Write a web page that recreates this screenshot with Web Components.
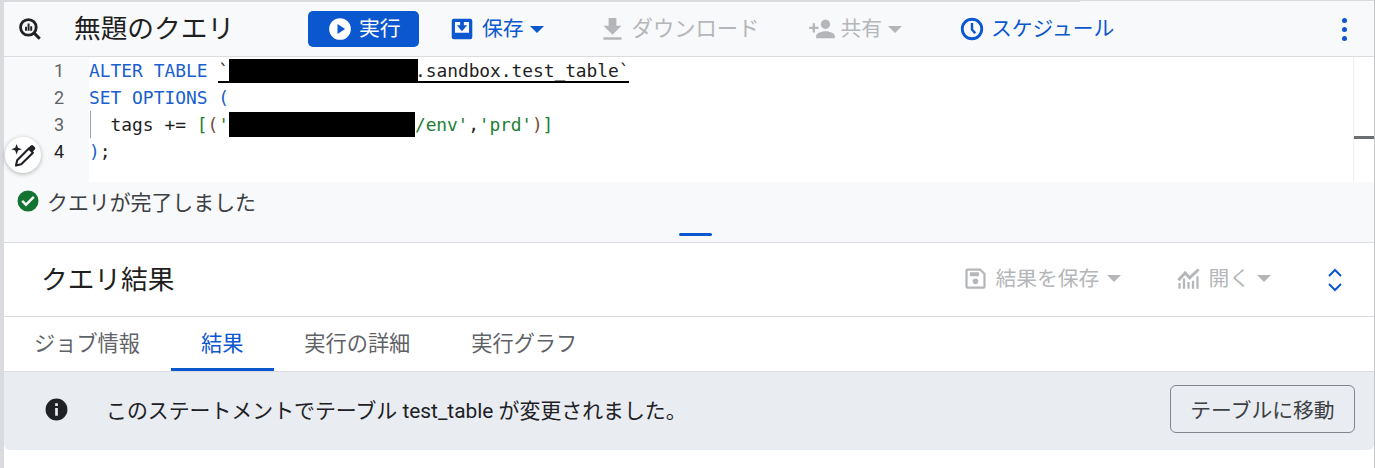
<!DOCTYPE html>
<html lang="ja">
<head>
<meta charset="utf-8">
<style>
  html, body { margin: 0; padding: 0; background: #fff; }
  body { width: 1375px; height: 468px; overflow: hidden; font-family: Roboto, "Noto Sans CJK JP", sans-serif; }
</style>
</head>
<body>
<bq-app></bq-app>
<script>
(() => {
  const UI_FONT = `Roboto, "Noto Sans CJK JP", sans-serif`;

  const ICONS = {
    query: '<circle cx="10.5" cy="10.5" r="7.2" fill="none" stroke="currentColor" stroke-width="2.6"/><path d="M15.8 15.8 21 21" stroke="currentColor" stroke-width="2.8" fill="none"/><path d="M7.4 10h1.8v3.5H7.4zM9.8 7h1.8v6.500H9.800zM12.200 9.500H14v4h-1.800z" fill="currentColor"/>',
    play: '<path fill-rule="evenodd" d="M12 2a10 10 0 1 0 0 20 10 10 0 0 0 0-20zM9.700 16.700V7.300l7 4.700z" fill="currentColor"/>',
    save: '<path fill-rule="evenodd" d="M4.500 2.500h15a2 2 0 0 1 2 2v15a2 2 0 0 1-2 2h-15a2 2 0 0 1-2-2v-15a2 2 0 0 1 2-2zM5.500 5.500v10h13v-10z" fill="currentColor"/><path d="M10.300 3h3.400v5.500h3L12 14 7.300 8.500h3z" fill="currentColor"/>',
    download: '<path d="M19 9h-4V3H9v6H5l7 7 7-7zM5 18v2h14v-2H5z" fill="currentColor"/>',
    share: '<path d="M15 12c2.210 0 4-1.790 4-4s-1.790-4-4-4-4 1.790-4 4 1.790 4 4 4zM6 10V7H4v3H1v2h3v3h2v-3h3v-2H6zm9 4c-2.670 0-8 1.340-8 4v2h16v-2c0-2.660-5.330-4-8-4z" fill="currentColor"/>',
    clock: '<circle cx="12" cy="12" r="9" fill="none" stroke="currentColor" stroke-width="2.600"/><path d="M12 6.500V12.500l3 3.500" fill="none" stroke="currentColor" stroke-width="2.200"/>',
    floppy: '<path fill-rule="evenodd" d="M5 3h11.500L21 7.500V19a2 2 0 0 1-2 2H5a2 2 0 0 1-2-2V5a2 2 0 0 1 2-2zm0 2v14h14V8.300L15.700 5zm2 1.500h8v3.500H7zM12 12a2.500 2.500 0 1 1 0 5 2.500 2.500 0 0 1 0-5z" fill="currentColor"/>',
    chart: '<path d="M3 21v-5h2v5zm4 0v-9h2v9zm4 0v-6h2v6zm4 0v-7h2v7zm4 0V10h2v11z" fill="currentColor"/><path d="M3 13.500 9 7l4 4.500L21 4" fill="none" stroke="currentColor" stroke-width="2.600"/>'
  };

  const svg = (name, size) => `<svg width="${size}" height="${size}" viewBox="0 0 24 24" aria-hidden="true">${ICONS[name]}</svg>`;

  class BqAction extends HTMLElement {
    constructor() {
      super();
      const icon = this.getAttribute('icon');
      const size = this.getAttribute('size') || 24;
      const caret = this.hasAttribute('caret') ? '<span class="caret"></span>' : '';
      this.attachShadow({ mode: 'open' }).innerHTML = `
        <style>
          :host { display: inline-flex; align-items: center; gap: var(--icon-gap, 8px); color: var(--c, #0b57d0); font-size: var(--fs, 20.800px); line-height: 28px; white-space: nowrap; }
          svg { display: block; flex: none; }
          .caret { width: 0; height: 0; border: 7px solid transparent; border-top: 7px solid currentColor; border-bottom: 0; margin-left: var(--caret-gap, -1px); }
        </style>
        ${svg(icon, size)}<slot></slot>${caret}`;
    }
  }
  customElements.define('bq-action', BqAction);

  class BqToolbar extends HTMLElement {
    constructor() {
      super();
      this.attachShadow({ mode: 'open' }).innerHTML = `
        <style>
          :host { display: flex; align-items: center; height: 54px; background: #f8f9fa; border-bottom: 1px solid #dadce0; color: #1f1f1f; position: relative; }
          .logo { margin-left: 13px; width: 26px; height: 26px; color: #202124; }
          .logo svg { display: block; }
          h1 { margin: 0 0 0 31px; width: 234px; font-size: 26.700px; font-weight: 400; line-height: 34px; white-space: nowrap; }
          .run { box-sizing: border-box; width: 111px; height: 36px; border-radius: 5px; background: #0b57d0; --c: #fff; --icon-gap: 6px; padding-left: 19px; }
          .save { margin-left: 30px; --icon-gap: 7px; }
          .dl { margin-left: 53px; --c: #b4b6b9; --icon-gap: 4px; --fs: 21.300px; }
          .share { margin-left: 49px; --c: #b4b6b9; --icon-gap: 4px; --caret-gap: 2px; }
          .sched { margin-left: 57px; --icon-gap: 6px; }
          .kebab { margin-left: auto; margin-right: 27px; display: flex; flex-direction: column; gap: 4px; }
          .kebab i { width: 5px; height: 5px; border-radius: 50%; background: #0b57d0; }
        </style>
        <span class="logo">${svg('query', 26)}</span>
        <h1>無題のクエリ</h1>
        <bq-action class="run" icon="play" size="26">実行</bq-action>
        <bq-action class="save" icon="save" size="26" caret>保存</bq-action>
        <bq-action class="dl" icon="download" size="31">ダウンロード</bq-action>
        <bq-action class="share" icon="share" size="28" caret>共有</bq-action>
        <bq-action class="sched" icon="clock" size="26">スケジュール</bq-action>
        <span class="kebab"><i></i><i></i><i></i></span>`;
    }
  }
  customElements.define('bq-toolbar', BqToolbar);

  class BqEditor extends HTMLElement {
    constructor() {
      super();
      this.attachShadow({ mode: 'open' }).innerHTML = `
        <style>
          :host { display: grid; grid-template-columns: 85px 1fr 21px; height: 125px; background: #fff; position: relative; font: 17.900px/27px "DejaVu Sans Mono", monospace; color: #1f1f1f; }
          .nums { background: #f8f9fa; color: #5f6368; text-align: right; padding-right: 25px; font-family: ${UI_FONT}; font-size: 18px; box-sizing: border-box; }
          .nums div:last-child { color: #1f1f1f; }
          .code { position: relative; }
          .line { height: 27px; white-space: pre; }
          .kw { color: #1a5fd0; }
          .br { color: #1a5fd0; }
          .grn { color: #1e7e34; }
          .brn { color: #7b4a36; }
          .tight { letter-spacing: -0.150px; }
          .tick { border-bottom: 2px solid #000; display: inline-block; height: 24px; line-height: 27px; }
          .tick .tight { letter-spacing: -0.050px; }
          .x { display: inline-block; background: #000; height: 23px; vertical-align: top; margin-top: 2px; }
          .x.low { height: 25px; margin-top: 1px; }
          .indent { position: absolute; left: 1px; top: 54px; width: 1px; height: 27px; background: #9aa0a6; }
          .ruler { border-left: 1px solid #eceef0; position: relative; }
          .ruler::after { content: ""; position: absolute; left: 0; right: 0; top: 79px; height: 3px; background: #6b6e72; }
          .wand { position: absolute; left: 1px; top: 80px; width: 36px; height: 36px; border-radius: 50%; background: #fff; box-shadow: 0 1px 4px rgba(60,64,67,.4); display: flex; align-items: center; justify-content: center; color: #202124; }
          .wand svg { display: block; }
        </style>
        <div class="nums"><div>1</div><div>2</div><div>3</div><div>4</div></div>
        <div class="code">
          <span class="indent"></span>
          <div class="line"><span class="kw">ALTER TABLE</span> <span class="tick">\`<span class="x" style="width:189px;margin-right:-3px"></span><span class="tight">.sandbox.test_table\`</span></span></div>
          <div class="line"><span class="kw">SET OPTIONS</span> <span class="br">(</span></div>
          <div class="line">  tags += <span class="grn">[</span><span class="brn">(</span><span class="grn">'</span><span class="x low" style="width:186px"></span><span class="tight"><span class="grn">/env'</span>,<span class="grn">'prd'</span><span class="brn">)</span><span class="grn">]</span></span></div>
          <div class="line"><span class="br">)</span>;</div>
        </div>
        <div class="ruler"></div>
        <div class="wand"><svg width="28" height="28" viewBox="0 0 24 24" aria-hidden="true"><path d="M6 21l1-4.500L17 6.500 20.500 10 10.500 20z" fill="none" stroke="currentColor" stroke-width="1.800" stroke-linejoin="round"/><path d="M16.500 6l2-2a1.700 1.700 0 0 1 2.400 0l1.100 1.100a1.700 1.700 0 0 1 0 2.400l-2 2z" fill="currentColor"/><path d="M6.500 2.500l1.200 3.300 3.300 1.200-3.300 1.200-1.200 3.300-1.200-3.300L2 7l3.300-1.200z" fill="currentColor"/></svg></div>`;
    }
  }
  customElements.define('bq-editor', BqEditor);

  class BqStatus extends HTMLElement {
    constructor() {
      super();
      this.attachShadow({ mode: 'open' }).innerHTML = `
        <style>
          :host { display: block; height: 61px; box-sizing: border-box; background: #f8f9fa; border-bottom: 1px solid #dadce0; position: relative; color: #3c4043; font-size: 20.900px; }
          .row { display: flex; align-items: center; gap: 7px; height: 38px; padding-left: 12px; }
          svg { display: block; }
          .handle { position: absolute; left: 675px; bottom: 6px; width: 33px; height: 3px; border-radius: 2px; background: #0b57d0; }
        </style>
        <div class="row"><svg width="24" height="24" viewBox="0 0 24 24" aria-hidden="true"><path fill-rule="evenodd" d="M12 1.500a10.500 10.500 0 1 0 0 21 10.500 10.500 0 0 0 0-21zM10 17.400l-4.700-4.700 1.800-1.700 2.900 2.900 6.900-6.900 1.800 1.700z" fill="#137333"/></svg><slot></slot></div>
        <span class="handle"></span>`;
    }
  }
  customElements.define('bq-status', BqStatus);

  class BqResultsHeader extends HTMLElement {
    constructor() {
      super();
      this.attachShadow({ mode: 'open' }).innerHTML = `
        <style>
          :host { display: flex; align-items: center; height: 73px; border-bottom: 1px solid #dadce0; color: #1f1f1f; --c: #b4b6b9; }
          h2 { margin: 0 0 5px 37px; font-size: 26.700px; font-weight: 400; white-space: nowrap; flex: 1; }
          bq-action { --caret-gap: 2px; --icon-gap: 6px; margin-bottom: 2px; }
          .open { margin-left: 54px; --icon-gap: 6px; --caret-gap: 1px; }
          .fold { margin: 0 31px 0 56px; color: #0b57d0; display: block; }
        </style>
        <h2><slot></slot></h2>
        <bq-action icon="floppy" size="27" caret>結果を保存</bq-action>
        <bq-action class="open" icon="chart" size="27" caret>開く</bq-action>
        <svg class="fold" width="16" height="24" viewBox="0 0 16 24" aria-hidden="true"><path d="M2 8l6-6 6 6M2 16l6 6 6-6" fill="none" stroke="currentColor" stroke-width="2"/></svg>`;
    }
  }
  customElements.define('bq-results-header', BqResultsHeader);

  class BqTabs extends HTMLElement {
    constructor() {
      super();
      this.attachShadow({ mode: 'open' }).innerHTML = `
        <style>
          :host { display: flex; height: 54px; border-bottom: 1px solid #dadce0; font-size: 21.200px; color: #5f6368; }
          span { display: flex; align-items: center; padding: 0 31px 2px 30px; height: 54px; box-sizing: border-box; white-space: nowrap; border-bottom: 3px solid transparent; }
          span:first-child { padding-left: 33px; padding-right: 26px; }
          .on { color: #0b57d0; border-bottom-color: #0b57d0; }
        </style>
        <span>ジョブ情報</span><span class="on">結果</span><span>実行の詳細</span><span>実行グラフ</span>`;
    }
  }
  customElements.define('bq-tabs', BqTabs);

  class BqNotice extends HTMLElement {
    constructor() {
      super();
      this.attachShadow({ mode: 'open' }).innerHTML = `
        <style>
          :host { display: flex; align-items: center; height: 78px; box-sizing: border-box; background: #e9ecf1; border-radius: 0 0 6px 6px; color: #202124; font-size: 20.900px; padding: 0 19px 4px 40px; }
          svg { display: block; flex: none; }
          p { margin: 0 0 0 37px; flex: 1; white-space: nowrap; }
          button { font: inherit; font-size: 20.800px; color: #3c4043; background: transparent; border: 1px solid #80868b; border-radius: 6px; height: 48px; width: 185px; padding: 0; }
        </style>
        <svg width="25" height="25" viewBox="0 0 24 24" aria-hidden="true"><path fill-rule="evenodd" d="M12 1.500a10.500 10.500 0 1 0 0 21 10.500 10.500 0 0 0 0-21zM10.700 6h2.600v2.600h-2.600zm0 4.500h2.600V18h-2.600z" fill="#202124"/></svg>
        <p><slot></slot></p>
        <button>テーブルに移動</button>`;
    }
  }
  customElements.define('bq-notice', BqNotice);

  class BqApp extends HTMLElement {
    constructor() {
      super();
      this.attachShadow({ mode: 'open' }).innerHTML = `
        <style>
          :host { display: block; box-sizing: border-box; width: 1375px; height: 468px; padding-top: 2px; border-left: 4px solid #d9dbde; border-right: 1px solid #c4c6c9; font-family: ${UI_FONT};
            background: linear-gradient(#d9dbde, #d9dbde) 0 0 / 1076px 2px no-repeat, linear-gradient(#d9dbde, #d9dbde) 0 0 / 100% 1px no-repeat, linear-gradient(#f8f9fa, #f8f9fa) 0 0 / 100% 2px no-repeat, #fff; }
        </style>
        <bq-toolbar></bq-toolbar>
        <bq-editor></bq-editor>
        <bq-status>クエリが完了しました</bq-status>
        <bq-results-header>クエリ結果</bq-results-header>
        <bq-tabs></bq-tabs>
        <bq-notice>このステートメントでテーブル test_table が変更されました。</bq-notice>`;
    }
  }
  customElements.define('bq-app', BqApp);
})();
</script>
</body>
</html>
